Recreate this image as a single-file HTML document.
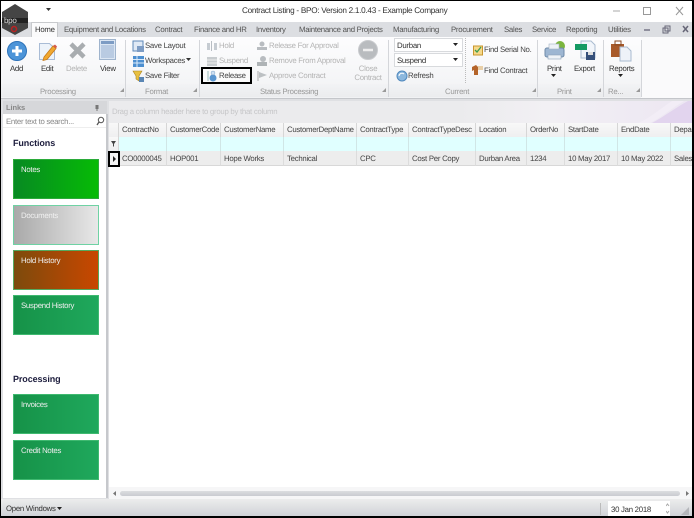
<!DOCTYPE html>
<html><head><meta charset="utf-8"><style>
html,body{margin:0;padding:0}
body{width:694px;height:518px;overflow:hidden;background:#fff;position:relative;font-family:"Liberation Sans",sans-serif;font-size:7.8px;letter-spacing:-.27px;text-rendering:geometricPrecision;color:#444}
div,svg,span.a{position:absolute}
.t{position:absolute;white-space:nowrap;line-height:11px}
.g{color:#b4b4b4}
.c{text-align:center}
.lb{color:#999}
.sep{position:absolute;top:40px;width:1px;height:57px;background:#d4d6da}
.h{position:absolute;top:123px;height:14px;background:linear-gradient(#f8f8f8,#efeff0);border-right:1px solid #d6d6d6;line-height:14px;padding-left:3px;box-sizing:border-box;white-space:nowrap;overflow:hidden;color:#444}
.f{position:absolute;top:137px;height:14px;background:#e0ffff;border-right:1px solid #d0e6e6;box-sizing:border-box}
.d{position:absolute;top:151px;height:15px;background:#ededed;border-right:1px solid #dcdcdc;border-bottom:1px solid #d8d8d8;line-height:15px;padding-left:3px;box-sizing:border-box;white-space:nowrap;overflow:hidden;color:#444}
.tile{position:absolute;left:13px;width:86px;height:40px;box-sizing:border-box;color:#eee;padding:4px 0 0 7px;line-height:11px}
.gr{background:linear-gradient(90deg,#169248,#1fa85c);border:1px solid #3fb970}
</style></head><body>
<!-- title bar -->
<div style="left:0;top:0;width:694px;height:22px;background:#fff"></div>
<div class="t" style="left:242px;top:5px;font-size:8.2px;letter-spacing:-.28px;color:#333">Contract Listing - BPO: Version 2.1.0.43 - Example Company</div>
<svg style="left:45px;top:7px" width="8" height="5"><path d="M1 1h5L3.500 4z" fill="#333"/></svg>
<svg style="left:608px;top:5px" width="76" height="13"><path d="M5 6h7" stroke="#aaa"/><rect x="35.500" y="2.500" width="7" height="7" fill="none" stroke="#999"/><path d="M68 2l7 8M75 2l-7 8" stroke="#999"/></svg>
<!-- tab bar -->
<div style="left:1px;top:22px;width:692px;height:15px;background:#dcdee2"></div>
<div style="left:31px;top:22px;width:27px;height:16px;background:#fbfbfc;border:1px solid #c8cacd;border-bottom:0;box-sizing:border-box"></div>
<div class="t" style="left:35px;top:24px;color:#333">Home</div>
<div class="t" style="left:64px;top:24px;color:#555">Equipment and Locations</div>
<div class="t" style="left:155px;top:24px;color:#555">Contract</div>
<div class="t" style="left:194px;top:24px;color:#555">Finance and HR</div>
<div class="t" style="left:256px;top:24px;color:#555">Inventory</div>
<div class="t" style="left:299px;top:24px;color:#555">Maintenance and Projects</div>
<div class="t" style="left:393px;top:24px;color:#555">Manufacturing</div>
<div class="t" style="left:451px;top:24px;color:#555">Procurement</div>
<div class="t" style="left:504px;top:24px;color:#555">Sales</div>
<div class="t" style="left:532px;top:24px;color:#555">Service</div>
<div class="t" style="left:566px;top:24px;color:#555">Reporting</div>
<div class="t" style="left:608px;top:24px;color:#555">Utilities</div>
<svg style="left:640px;top:24px" width="50" height="11"><path d="M4 6h6" stroke="#778" stroke-width="1.500"/><rect x="23" y="4" width="5" height="5" fill="none" stroke="#667"/><rect x="25" y="2" width="5" height="5" fill="none" stroke="#667"/><path d="M43 2l5 6M48 2l-5 6" stroke="#667" stroke-width="1.500"/></svg>
<!-- ribbon -->
<div style="left:1px;top:37px;width:692px;height:61px;background:linear-gradient(#fdfdfe,#f1f2f4);border-bottom:2px solid #c4c6ca;box-sizing:content-box"></div>
<div style="left:1px;top:84px;width:692px;height:13px;background:linear-gradient(#f2f3f5,#ebecee)"></div>
<div class="sep" style="left:125px"></div><div class="sep" style="left:199px"></div><div class="sep" style="left:388px"></div><div class="sep" style="left:537px"></div><div class="sep" style="left:603px"></div>
<div style="left:641px;top:37px;width:52px;height:61px;background:#fafafb"></div>
<div class="sep" style="left:641px"></div>
<!-- logo -->
<svg style="left:1px;top:3px" width="28" height="32"><path d="M14 1L27 9V25L14 32L1 25V9Z" fill="#454545"/><path d="M1 15h26v5H1z" fill="#222"/><text x="3" y="20" font-size="8" fill="#ddd" font-family="Liberation Sans">bpo</text><circle cx="13" cy="26" r="2.500" fill="none" stroke="#b22" stroke-width="1.500"/></svg>
<!-- add -->
<svg style="left:7px;top:41px" width="20" height="20"><circle cx="10" cy="10" r="9.500" fill="#4c94d8" stroke="#2d72b8"/><path d="M10 5v10M5 10h10" stroke="#fff" stroke-width="3"/></svg>
<div class="t" style="left:10px;top:63px;color:#333">Add</div>
<!-- edit -->
<svg style="left:38px;top:40px" width="20" height="21"><path d="M1.500 3.500h10l5 5v11h-15z" fill="#edf3fa" stroke="#a9bcd6"/><path d="M6 17L15 6l3 2.500L9 19.500l-4 1z" fill="#f0a830" stroke="#c67a1c" stroke-width=".8"/><path d="M15 6l3 2.500 1-2-2-2z" fill="#d45a4a"/></svg>
<div class="t" style="left:41px;top:63px;color:#333">Edit</div>
<!-- delete -->
<svg style="left:69px;top:42px" width="17" height="17"><path d="M2 2l13 13M15 2L2 15" stroke="#a9adb0" stroke-width="4.500"/></svg>
<div class="t g" style="left:66px;top:63px">Delete</div>
<!-- view -->
<svg style="left:99px;top:39px" width="17" height="21"><rect x=".5" y=".5" width="16" height="20" fill="#dbe6f3" stroke="#9fb4cd"/><rect x="2" y="2" width="13" height="3" fill="#7d9cc4"/><rect x="2" y="6" width="13" height="13" fill="#b9cbe2"/></svg>
<div class="t" style="left:100px;top:63px;color:#333">View</div>
<div class="t lb" style="left:40px;top:86px">Processing</div>
<!-- format -->
<svg style="left:132px;top:40px" width="13" height="13"><rect x="1" y="1" width="10" height="10" fill="#dfe9f5" stroke="#5d88b8"/><rect x="5" y="6" width="7" height="6" fill="#7d9cc4"/></svg>
<div class="t" style="left:145px;top:40px;color:#444">Save Layout</div>
<svg style="left:132px;top:55px" width="13" height="13"><rect x="1" y="1" width="11" height="11" fill="#4d8fd0"/><path d="M1 4.500h11M1 8h11M5 1v11" stroke="#dcebfa"/></svg>
<div class="t" style="left:145px;top:55px;color:#444">Workspaces</div>
<svg style="left:186px;top:58px" width="6" height="4"><path d="M0 0h5L2.500 3z" fill="#333"/></svg>
<svg style="left:132px;top:70px" width="13" height="13"><path d="M1 1h9L7 6v5L4 9V6z" fill="#e8c040" stroke="#aa8420" stroke-width=".6"/><rect x="7" y="7" width="5" height="5" fill="#5a86b4"/></svg>
<div class="t" style="left:145px;top:70px;color:#444">Save Filter</div>
<div class="t lb" style="left:145px;top:86px">Format</div>
<!-- status -->
<svg style="left:206px;top:40px" width="12" height="12"><path d="M1 3h3v7H1zM8 3h3v7H8z" fill="#c6ccd2"/><path d="M5.500 1v10" stroke="#b8bec4"/></svg>
<div class="t g" style="left:219px;top:40px">Hold</div>
<svg style="left:206px;top:55px" width="12" height="12"><rect x="1" y="2" width="10" height="9" fill="#c8cccf"/><path d="M1 5h10M1 8h10" stroke="#eee"/></svg>
<div class="t g" style="left:219px;top:55px">Suspend</div>
<div style="left:201px;top:67px;width:51px;height:17px;border:2px solid #000;box-sizing:border-box;background:#fbfbfb"></div>
<svg style="left:206px;top:70px" width="12" height="12"><path d="M2 1v10" stroke="#9bb" /><circle cx="7" cy="8" r="3.500" fill="#5b96d0"/><circle cx="7" cy="3" r="2" fill="#cfe0f2" stroke="#7fa4c8" stroke-width=".5"/></svg>
<div class="t" style="left:219px;top:70px;color:#444">Release</div>
<svg style="left:256px;top:40px" width="12" height="12"><path d="M1 10h10V7H1z" fill="#b8bcc0"/><circle cx="6" cy="4" r="2.500" fill="#b8bcc0"/></svg>
<div class="t g" style="left:269px;top:40px">Release For Approval</div>
<svg style="left:256px;top:55px" width="12" height="12"><path d="M1 11h10V7H1z" fill="#aeb3b6"/><circle cx="7" cy="4" r="3" fill="#b8bcc0"/></svg>
<div class="t g" style="left:269px;top:55px">Remove From Approval</div>
<svg style="left:256px;top:70px" width="12" height="12"><path d="M2 1v10" stroke="#aaa"/><path d="M3 2l8 3-8 3z" fill="#bcc0c3"/></svg>
<div class="t g" style="left:269px;top:70px">Approve Contract</div>
<svg style="left:358px;top:40px" width="20" height="20"><circle cx="10" cy="10" r="9.500" fill="#b9bcbf" stroke="#c9cbce"/><path d="M5 10h10" stroke="#eee" stroke-width="2.500"/></svg>
<div class="t g c" style="left:350px;top:63px;width:36px">Close</div>
<div class="t g c" style="left:350px;top:72px;width:36px">Contract</div>
<div class="t lb" style="left:260px;top:86px">Status Processing</div>
<svg style="left:382px;top:88px" width="5" height="5"><path d="M4 0v4H0z" fill="#999"/></svg>
<svg style="left:120px;top:88px" width="5" height="5"><path d="M4 0v4H0z" fill="#999"/></svg>
<svg style="left:193px;top:88px" width="5" height="5"><path d="M4 0v4H0z" fill="#999"/></svg>
<svg style="left:532px;top:88px" width="5" height="5"><path d="M4 0v4H0z" fill="#999"/></svg>
<svg style="left:597px;top:88px" width="5" height="5"><path d="M4 0v4H0z" fill="#999"/></svg>
<svg style="left:636px;top:88px" width="5" height="5"><path d="M4 0v4H0z" fill="#999"/></svg>
<!-- current -->
<div style="left:394px;top:38px;width:69px;height:14px;background:#fff;border:1px solid #d8dadd;box-sizing:border-box"></div>
<div class="t" style="left:397px;top:40px;color:#333">Durban</div>
<svg style="left:453px;top:43px" width="6" height="4"><path d="M0 0h5L2.500 3z" fill="#222"/></svg>
<div style="left:394px;top:53px;width:69px;height:14px;background:#fff;border:1px solid #d8dadd;box-sizing:border-box"></div>
<div class="t" style="left:397px;top:55px;color:#333">Suspend</div>
<svg style="left:453px;top:58px" width="6" height="4"><path d="M0 0h5L2.500 3z" fill="#222"/></svg>
<svg style="left:396px;top:70px" width="12" height="12"><circle cx="6" cy="6" r="5" fill="#8cb8de" stroke="#4f88bd"/><path d="M3 6a3 3 0 0 1 5-2" stroke="#fff" fill="none"/></svg>
<div class="t" style="left:408px;top:70px;color:#444">Refresh</div>
<div style="left:465px;top:38px;height:45px;border-left:1px dotted #bbb;width:0"></div>
<svg style="left:472px;top:44px" width="12" height="12"><rect x="1.500" y="2" width="9" height="9" fill="#f6d98a" stroke="#c8962e"/><path d="M3 6l2 2 4-5" stroke="#3d9c50" fill="none" stroke-width="1.300"/></svg>
<div class="t" style="left:484px;top:44px;color:#444">Find Serial No.</div>
<svg style="left:471px;top:64px" width="13" height="12"><path d="M1 3l4-2 2 2v8H3V6L1 7z" fill="#b4642a"/><path d="M7 2h5v4H7z" fill="#e8cfa8"/></svg>
<div class="t" style="left:484px;top:65px;color:#444">Find Contract</div>
<div class="t lb" style="left:445px;top:86px">Current</div>
<!-- print/export -->
<svg style="left:544px;top:40px" width="22" height="21"><circle cx="16" cy="6" r="5" fill="#7cb63e"/><rect x="1" y="8" width="19" height="9" rx="2" fill="#9db6d2" stroke="#6e8aa8"/><rect x="5" y="4" width="10" height="5" fill="#eef2f7" stroke="#a3b2c4" stroke-width=".6"/><rect x="4" y="15" width="13" height="4" fill="#eef2f7" stroke="#8ba0b8" stroke-width=".6"/></svg>
<div class="t" style="left:547px;top:63px;color:#333">Print</div>
<svg style="left:551px;top:74px" width="6" height="4"><path d="M0 0h5L2.500 3z" fill="#222"/></svg>
<svg style="left:574px;top:40px" width="22" height="21"><path d="M7 1h10l4 4v13H7z" fill="#f1f5fa" stroke="#a9bbd0"/><rect x="1" y="4" width="12" height="6" fill="#159a63"/><rect x="12" y="12" width="9" height="8" fill="#36507a"/><rect x="14" y="12" width="5" height="3" fill="#ddd"/></svg>
<div class="t" style="left:574px;top:63px;color:#333">Export</div>
<div class="t lb" style="left:557px;top:86px">Print</div>
<svg style="left:610px;top:40px" width="23" height="22"><rect x="1" y="4" width="13" height="13" fill="#a85a2a"/><rect x="5" y="1" width="6" height="4" fill="none" stroke="#8a4a22"/><path d="M10 7h7l4 4v10H10z" fill="#eef2f8" stroke="#a9bbd0"/></svg>
<div class="t" style="left:609px;top:63px;color:#333">Reports</div>
<svg style="left:618px;top:74px" width="6" height="4"><path d="M0 0h5L2.500 3z" fill="#222"/></svg>
<div class="t lb" style="left:608px;top:86px">Re...</div>
<!-- body bg -->
<div style="left:1px;top:99px;width:692px;height:403px;background:#dfe0e3"></div>
<!-- left panel -->
<div style="left:3px;top:101px;width:104px;height:13px;background:#d6d7da"></div>
<div class="t" style="left:6px;top:102px;color:#888;font-weight:bold;font-size:7.5px;letter-spacing:-.1px">Links</div>
<svg style="left:94px;top:104px" width="7" height="8"><rect x="1.500" y="1" width="3" height="4" fill="#777"/><path d="M3 5v2" stroke="#777"/></svg>
<div style="left:3px;top:114px;height:384px;background:#fff;border-right:2px solid #c6c8cc;box-sizing:content-box;width:103px"></div>
<div class="t" style="left:6px;top:116px;color:#888">Enter text to search...</div>
<svg style="left:96px;top:116px" width="9" height="10"><circle cx="5" cy="4" r="2.700" fill="none" stroke="#555"/><path d="M3 6l-2 3" stroke="#555" stroke-width="1.300"/></svg>
<div style="left:3px;top:127px;width:103px;height:1px;background:#eee"></div>
<div class="t" style="left:13px;top:138px;font-weight:bold;font-size:9px;letter-spacing:-.1px;color:#1c1c3c">Functions</div>
<div class="tile" style="top:159px;background:linear-gradient(90deg,#078a22,#06bb06);border:1px solid #2bab3a">Notes</div>
<div class="tile" style="top:205px;background:linear-gradient(90deg,#a9a9a9,#e8e8e8);border:1px solid #6fd2a4;color:#f0f0f0">Documents</div>
<div class="tile" style="top:250px;background:linear-gradient(90deg,#7c4a0c,#c94700);border:1px solid #56a95e;">Hold History</div>
<div class="tile gr" style="top:295px">Suspend History</div>
<div class="t" style="left:13px;top:374px;font-weight:bold;font-size:9px;letter-spacing:-.1px;color:#1c1c3c">Processing</div>
<div class="tile gr" style="top:394px">Invoices</div>
<div class="tile gr" style="top:440px">Credit Notes</div>
<!-- grid area -->
<div style="left:109px;top:101px;width:584px;height:398px;background:#fff"></div>
<div style="left:109px;top:101px;width:584px;height:22px;background:linear-gradient(90deg,#ebebed 0,#ebebed 60%,#f2f0f4 75%,#ece6f2 100%)"></div>
<svg style="left:600px;top:101px" width="93" height="22"><path d="M52 22C65 15 78 5 88 0h5v22z" fill="#e2d4ee"/><path d="M38 22C50 17 60 8 72 0h12C72 7 62 16 50 22z" fill="#f2edf6"/></svg>
<div class="t" style="left:112px;top:106px;color:#c6c6c8">Drag a column header here to group by that column</div>
<!-- header -->
<div class="h" style="left:109px;width:10px;padding:0"></div>
<div class="h" style="left:119px;width:48px">ContractNo</div>
<div class="h" style="left:167px;width:54px">CustomerCode</div>
<div class="h" style="left:221px;width:63px">CustomerName</div>
<div class="h" style="left:284px;width:73px">CustomerDeptName</div>
<div class="h" style="left:357px;width:52px">ContractType</div>
<div class="h" style="left:409px;width:67px">ContractTypeDesc</div>
<div class="h" style="left:476px;width:51px">Location</div>
<div class="h" style="left:527px;width:38px">OrderNo</div>
<div class="h" style="left:565px;width:53px">StartDate</div>
<div class="h" style="left:618px;width:53px">EndDate</div>
<div class="h" style="left:671px;width:22px;border-right:0">Department</div>
<!-- filter -->
<div class="h" style="left:109px;top:137px;height:14px;width:10px;padding:0"></div>
<svg style="left:111px;top:141px" width="6" height="6"><path d="M0 0h5L3 3v3L2 5V3z" fill="#444"/></svg>
<div class="f" style="left:119px;width:48px"></div><div class="f" style="left:167px;width:54px"></div><div class="f" style="left:221px;width:63px"></div><div class="f" style="left:284px;width:73px"></div><div class="f" style="left:357px;width:52px"></div><div class="f" style="left:409px;width:67px"></div><div class="f" style="left:476px;width:51px"></div><div class="f" style="left:527px;width:38px"></div><div class="f" style="left:565px;width:53px"></div><div class="f" style="left:618px;width:53px"></div><div class="f" style="left:671px;width:22px;border:0"></div>
<!-- row -->
<div class="d" style="left:119px;width:48px">CO0000045</div>
<div class="d" style="left:167px;width:54px">HOP001</div>
<div class="d" style="left:221px;width:63px">Hope Works</div>
<div class="d" style="left:284px;width:73px">Technical</div>
<div class="d" style="left:357px;width:52px">CPC</div>
<div class="d" style="left:409px;width:67px">Cost Per Copy</div>
<div class="d" style="left:476px;width:51px">Durban Area</div>
<div class="d" style="left:527px;width:38px">1234</div>
<div class="d" style="left:565px;width:53px">10 May 2017</div>
<div class="d" style="left:618px;width:53px">10 May 2022</div>
<div class="d" style="left:671px;width:22px;border-right:0">Sales Dept</div>
<div style="left:108px;top:151px;width:12px;height:16px;border:2px solid #000;box-sizing:border-box;background:#f4f4f4"></div>
<svg style="left:112px;top:156px" width="5" height="6"><path d="M1 0l3 3-3 3z" fill="#222"/></svg>
<!-- scrollbar -->
<div style="left:109px;top:487px;width:584px;height:12px;background:#f6f6f7"></div>
<svg style="left:112px;top:491px" width="5" height="6"><path d="M4 0v5L1 2.500z" fill="#777"/></svg>
<div style="left:120px;top:491px;width:560px;height:5px;border-radius:3px;background:linear-gradient(#dcdde0,#c9cbd0)"></div>
<svg style="left:685px;top:491px" width="5" height="6"><path d="M1 0v5l3-2.500z" fill="#777"/></svg>
<!-- status bar -->
<div style="left:1px;top:499px;width:692px;height:18px;background:linear-gradient(#eceded,#cfd1d6)"></div>
<div class="t" style="left:6px;top:503px;color:#333">Open Windows</div>
<svg style="left:57px;top:507px" width="6" height="4"><path d="M0 0h5L2.500 3z" fill="#222"/></svg>
<div style="left:600px;top:503px;width:1px;height:12px;background:#bbb"></div>
<div style="left:608px;top:501px;width:62px;height:15px;background:#fff"></div>
<div class="t" style="left:611px;top:504px;color:#333">30 Jan 2018</div>
<svg style="left:666px;top:503px" width="4" height="12"><path d="M0 3l1.500-2L3 3M0 8l1.500 2L3 8" stroke="#aaa" fill="none"/></svg>
<svg style="left:680px;top:506px" width="10" height="10"><path d="M9 1v8H1z" fill="#b5b7bb"/></svg>
<!-- outer border -->
<div style="left:0;top:0;width:694px;height:518px;box-sizing:border-box;border:1px solid #000;border-right:2px solid #000;border-bottom:2px solid #000;pointer-events:none"></div>
</body></html>
